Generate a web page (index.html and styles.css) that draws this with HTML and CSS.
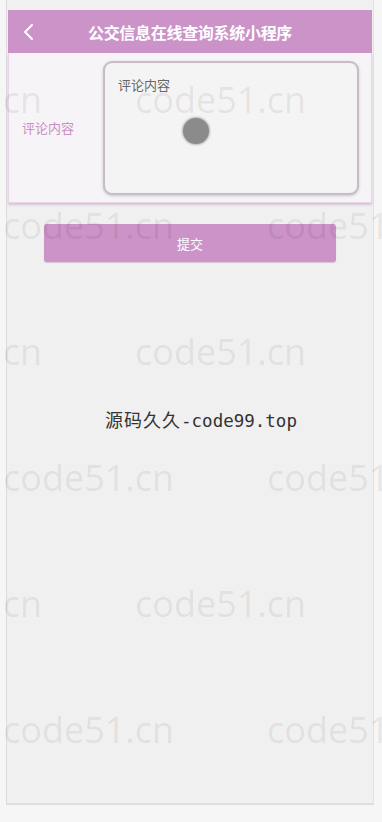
FILE: index.html
```html
<!DOCTYPE html>
<html lang="zh">
<head>
<meta charset="utf-8">
<link rel="stylesheet" href="styles.css">
</head>
<body>
<div class="frame">
  <header class="nav">
    <svg class="back" width="14" height="18" viewBox="0 0 14 18"><path d="M10 2 L3 9 L10 16" fill="none" stroke="#fff" stroke-width="2" stroke-linecap="round" stroke-linejoin="round"/></svg>
    <h1 class="title">公交信息在线查询系统小程序</h1>
  </header>
  <section class="card">
    <label class="label">评论内容</label>
    <div class="area"><span class="placeholder">评论内容</span></div>
  </section>
  <button class="submit">提交</button>
  <p class="credit"><span class="cjk">源码久久</span><span class="mono">-code99.top</span></p>
</div>
<div class="touch"></div>
<div class="marks">
  <div class="mrow odd"><span>code51.cn</span><span>code51.cn</span><span>code51.cn</span></div>
  <div class="mrow even"><span>code51.cn</span><span>code51.cn</span></div>
  <div class="mrow odd"><span>code51.cn</span><span>code51.cn</span><span>code51.cn</span></div>
  <div class="mrow even"><span>code51.cn</span><span>code51.cn</span></div>
  <div class="mrow odd"><span>code51.cn</span><span>code51.cn</span><span>code51.cn</span></div>
  <div class="mrow even"><span>code51.cn</span><span>code51.cn</span></div>
</div>
</body>
</html>
```

FILE: styles.css
```css
html, body {
  margin: 0;
  padding: 0;
}
body {
  background: #f6f6f6;
  font-family: "Noto Sans CJK SC", "Noto Sans", sans-serif;
  width: 382px;
  height: 822px;
  overflow: hidden;
  position: relative;
}
.frame {
  margin-left: 6px;
  width: 368px;
  height: 805px;
  box-sizing: border-box;
  padding: 10px 1px 0 1px;
  border-left: 1px solid #dcdcdc;
  border-right: 1px solid #e2e2e2;
  border-bottom: 2px solid #dedede;
  background: #f0f0f0;
  display: flex;
  flex-direction: column;
}
.nav {
  height: 43px;
  flex: none;
  background: #cb93c8;
  display: flex;
  align-items: center;
}
.back {
  margin-left: 14px;
}
.title {
  margin: 0;
  flex: 1;
  text-align: center;
  color: #fff;
  font-size: 16px;
  font-weight: 700;
  padding-right: 28px;
  letter-spacing: -0.3px;
}
.card {
  height: 150px;
  flex: none;
  box-sizing: border-box;
  border: 1px solid #ead4ea;
  border-top: none;
  background: #f6f4f6;
  box-shadow: 0 2px 2px rgba(160, 120, 160, 0.35);
  display: flex;
  align-items: center;
}
.label {
  width: 94px;
  padding-left: 13px;
  box-sizing: border-box;
  color: #c98fc6;
  font-size: 13px;
}
.area {
  width: 256px;
  height: 134px;
  box-sizing: border-box;
  border: 2px solid #c9bcc9;
  border-radius: 9px;
  box-shadow: 0 1px 3px rgba(0, 0, 0, 0.18), inset 0 0 1px rgba(0,0,0,0.1);
  background: #f5f4f5;
  padding: 8px 13px;
}
.placeholder {
  color: #666;
  font-size: 13px;
}
.submit {
  flex: none;
  margin: 21px 0 0 36px;
  width: 292px;
  height: 38px;
  border: none;
  border-radius: 3px;
  background: #cb93c8;
  color: #fff;
  font-family: "Noto Sans CJK SC", sans-serif;
  font-size: 13px;
  padding: 0;
  box-shadow: 0 1px 1px rgba(150, 100, 150, 0.3);
}
.credit {
  margin: 144px 0 0;
  text-align: center;
  font-size: 18px;
  color: #333;
  padding-left: 22px;
}
.cjk {
  font-family: "Noto Sans CJK SC", sans-serif;
  letter-spacing: 1px;
}
.mono {
  font-family: "DejaVu Sans Mono", monospace;
  font-size: 17.5px;
}
.touch {
  position: absolute;
  left: 183px;
  top: 118px;
  width: 26px;
  height: 26px;
  border-radius: 50%;
  background: #8b8b8b;
  box-shadow: 0 0 2px 1px rgba(120, 120, 120, 0.5);
}
.marks {
  position: absolute;
  inset: 0;
  overflow: hidden;
  pointer-events: none;
  padding-top: 80px;
}
.mrow {
  height: 126px;
  display: flex;
  gap: 96px;
  white-space: nowrap;
  font-family: "Open Sans", sans-serif;
  font-size: 36px;
  color: rgba(0, 0, 0, 0.085);
  line-height: 40px;
}
.mrow span {
  width: 168px;
  flex: none;
}
.odd {
  margin-left: -129px;
}
.even {
  margin-left: 3px;
}
```
